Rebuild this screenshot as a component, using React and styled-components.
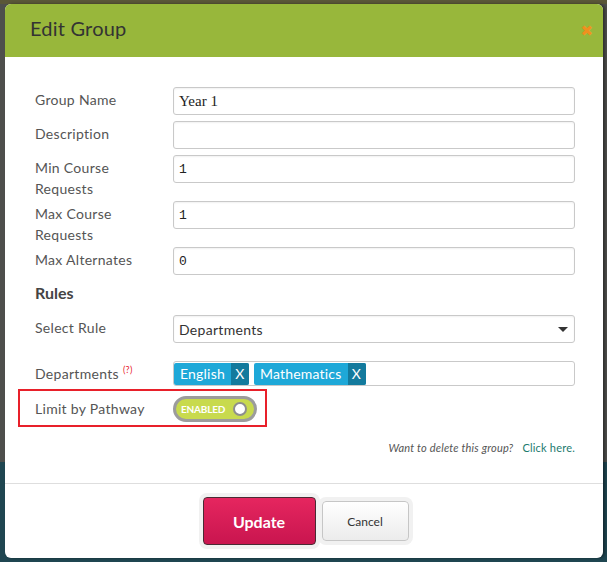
import styled, { createGlobalStyle } from 'styled-components';

const GlobalStyle = createGlobalStyle`
  html, body {
    margin: 0;
    padding: 0;
  }
  body {
    width: 607px;
    height: 562px;
    overflow: hidden;
    font-family: Lato, "Open Sans", sans-serif;
    background: linear-gradient(
      to bottom,
      #5a5738 0,
      #5a5738 4px,
      #4e4f4c 4px,
      #4e4f4c 462px,
      #1f4651 462px,
      #1f4651 562px
    );
  }
`;

const COLORS = {
  header: '#98b73b',
  title: '#333333',
  close: '#f0901e',
  label: '#555555',
  border: '#c9c9c9',
  tag: '#1ea8d8',
  tagDark: '#137a9d',
  toggle: '#c8da4e',
  highlight: '#e8202a',
  link: '#1b7a6e',
};

const Modal = styled.div`
  margin: 4px 0 0 5px;
  width: 598px;
  height: 554px;
  background: #fff;
  border-radius: 6px;
  overflow: hidden;
  display: flex;
  flex-direction: column;
  box-shadow: 2px 0 3px rgba(0, 0, 0, 0.4);
`;

const Header = styled.div`
  height: 53px;
  box-sizing: border-box;
  background: ${COLORS.header};
  display: flex;
  align-items: center;
  justify-content: space-between;
  padding: 0 10px 5px 25px;
`;

const Title = styled.h2`
  margin: 0;
  font-size: 20px;
  font-weight: 400;
  color: ${COLORS.title};
  letter-spacing: 0.2px;
`;

const Close = styled.span`
  color: ${COLORS.close};
  font-family: "DejaVu Sans", sans-serif;
  font-weight: bold;
  font-size: 15px;
  line-height: 1;
  margin-top: 6px;
`;

const Body = styled.div`
  padding: 30px 28px 27px 30px;
  display: flex;
  flex-direction: column;
  gap: 6px;
  border-bottom: 1px solid #dedede;
`;

const Row = styled.div`
  display: flex;
  align-items: flex-start;
  margin-bottom: ${(p) => p.$after || 0}px;
`;

const Label = styled.div`
  width: 138px;
  box-sizing: border-box;
  flex: none;
  padding: 2px 22px 0 0;
  margin-bottom: -4px;
  font-size: 14px;
  line-height: 21px;
  letter-spacing: 0.3px;
  color: ${COLORS.label};
`;

const Help = styled.sup`
  color: ${COLORS.highlight};
  font-size: 9px;
  margin-left: 4px;
  vertical-align: 6px;
  line-height: 0;
`;

const Input = styled.div`
  flex: 1;
  height: 28px;
  box-sizing: border-box;
  border: 1px solid ${COLORS.border};
  border-radius: 3px;
  box-shadow: inset 0 1px 2px rgba(0, 0, 0, 0.06);
  padding: 0 5px;
  display: flex;
  align-items: center;
  color: #222;
  font-family: ${(p) =>
    p.$mono ? '"Liberation Mono", monospace' : '"Liberation Serif", serif'};
  font-size: ${(p) => (p.$mono ? '13px' : '15px')};
`;

const Select = styled(Input)`
  font-family: Lato, "Open Sans", sans-serif;
  font-size: 14px;
  letter-spacing: 0.3px;
  color: #333;
  justify-content: space-between;
  padding: 0 4px 0 5px;
`;

const Caret = styled.span`
  width: 0;
  height: 0;
  border-left: 5px solid transparent;
  border-right: 5px solid transparent;
  border-top: 5px solid #333;
  margin-right: 2px;
`;

const TagBox = styled.div`
  flex: 1;
  height: 25px;
  box-sizing: border-box;
  border: 1px solid ${COLORS.border};
  border-radius: 3px;
  display: flex;
  align-items: center;
  gap: 5px;
`;

const Tag = styled.span`
  display: flex;
  height: 22px;
  background: ${COLORS.tag};
  color: #fff;
  font-size: 14px;
  letter-spacing: 0.2px;
  border-radius: 2px;
  overflow: hidden;
`;

const TagText = styled.span`
  padding: 0 6px;
  line-height: 22px;
`;

const TagRemove = styled.span`
  background: ${COLORS.tagDark};
  width: 18px;
  text-align: center;
  line-height: 22px;
`;

const Highlight = styled.div`
  align-self: flex-start;
  display: flex;
  align-items: flex-start;
  margin: -3px 0 0 -17px;
  padding: 5px 8px 3px 15px;
  border: 2px solid ${COLORS.highlight};
`;

const Toggle = styled.div`
  width: 84px;
  height: 26px;
  box-sizing: border-box;
  border: 3px solid #9c9c9c;
  border-radius: 13px;
  background: ${COLORS.toggle};
  display: flex;
  align-items: center;
  justify-content: space-between;
  padding: 0 7px 0 5px;
`;

const ToggleText = styled.span`
  color: #fff;
  font-size: 10px;
  font-weight: 700;
  letter-spacing: -0.2px;
`;

const Knob = styled.span`
  width: 10px;
  height: 10px;
  border-radius: 50%;
  background: #fff;
  border: 2px solid #8e8e8e;
`;

const DeleteLine = styled.div`
  margin-top: 7px;
  text-align: right;
  font-size: 11px;
  line-height: 16px;
  letter-spacing: 0.2px;
  color: #555;
`;

const DeleteQuestion = styled.em`
  margin-right: 9px;
`;

const DeleteLink = styled.a`
  color: ${COLORS.link};
  text-decoration: none;
`;

const Footer = styled.div`
  flex: 1;
  display: flex;
  align-items: center;
  justify-content: center;
  gap: 6px;
  padding-left: 3px;
`;

const Button = styled.button`
  font-family: Lato, "Open Sans", sans-serif;
  border-radius: 4px;
  cursor: pointer;
  box-shadow: 0 0 0 4px #f1f1f1;
  width: ${(p) => (p.$primary ? 113 : 87)}px;
  height: ${(p) => (p.$primary ? 48 : 40)}px;
  font-size: ${(p) => (p.$primary ? 16 : 12)}px;
  font-weight: ${(p) => (p.$primary ? 700 : 400)};
  color: ${(p) => (p.$primary ? '#fff' : '#333')};
  border: 1px solid ${(p) => (p.$primary ? '#4a2a33' : '#c6c6c6')};
  background: ${(p) =>
    p.$primary
      ? 'linear-gradient(to bottom, #e5265f, #c9154f)'
      : 'linear-gradient(to bottom, #ffffff, #ececec)'};
`;

const RulesHeading = styled.div`
  font-size: 16px;
  font-weight: 700;
  color: #444;
  line-height: 24px;
  margin-bottom: 4px;
`;

const fields = [
  { label: 'Group Name', value: 'Year 1' },
  { label: 'Description', value: '' },
  { label: 'Min Course Requests', value: '1', mono: true },
  { label: 'Max Course Requests', value: '1', mono: true },
  { label: 'Max Alternates', value: '0', mono: true },
];

export default function App() {
  return (
    <>
      <GlobalStyle />
      <Modal>
        <Header>
          <Title>Edit Group</Title>
          <Close>✖</Close>
        </Header>
        <Body>
          {fields.map((f) => (
            <Row key={f.label}>
              <Label>{f.label}</Label>
              <Input $mono={f.mono}>{f.value}</Input>
            </Row>
          ))}
          <RulesHeading>Rules</RulesHeading>
          <Row $after={12}>
            <Label>Select Rule</Label>
            <Select>
              Departments
              <Caret />
            </Select>
          </Row>
          <Row>
            <Label>
              Departments<Help>(?)</Help>
            </Label>
            <TagBox>
              {['English', 'Mathematics'].map((t) => (
                <Tag key={t}>
                  <TagText>{t}</TagText>
                  <TagRemove>X</TagRemove>
                </Tag>
              ))}
            </TagBox>
          </Row>
          <Highlight>
            <Label>Limit by Pathway</Label>
            <Toggle>
              <ToggleText>ENABLED</ToggleText>
              <Knob />
            </Toggle>
          </Highlight>
          <DeleteLine>
            <DeleteQuestion>Want to delete this group?</DeleteQuestion>
            <DeleteLink>Click here.</DeleteLink>
          </DeleteLine>
        </Body>
        <Footer>
          <Button $primary>Update</Button>
          <Button>Cancel</Button>
        </Footer>
      </Modal>
    </>
  );
}
